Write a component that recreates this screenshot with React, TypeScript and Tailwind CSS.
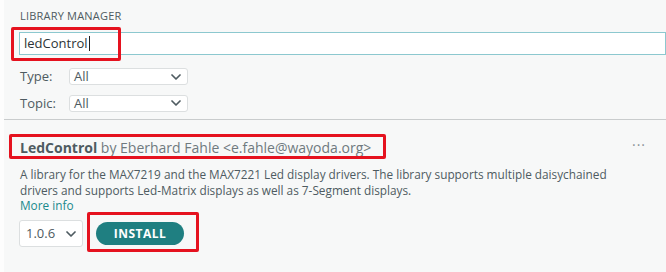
import React from 'react';

const Chevron = () => (
  <svg viewBox="0 0 10 6" className="w-[10px] h-[6px]" fill="none" stroke="#4e5b61" strokeWidth="1.7" strokeLinecap="round" strokeLinejoin="round">
    <path d="M1 1l4 4 4-4" />
  </svg>
);

const Select: React.FC<{ value: string; className?: string }> = ({ value, className }) => (
  <div className={`flex items-center justify-between bg-white border border-[#dcdfe0] rounded-[3px] pl-[4px] pr-[6px] text-[13px] text-[#4e5b61] ${className ?? ''}`}>
    <span>{value}</span>
    <Chevron />
  </div>
);

export default function App() {
  return (
    <div className="relative w-[666px] h-[272px] overflow-hidden flex bg-[#f7f8f8] text-[#4e5b61]" style={{ fontFamily: '"Open Sans", sans-serif' }}>
      <div className="w-[4px] bg-[#fdfdfd]" />
      <div className="flex-1 flex flex-col">
        <div className="pl-[16px] pt-[9px] pb-[6px] border-b border-[#c9cccd]">
          <div className="text-[11px] leading-[14px] tracking-[0.2px] uppercase">Library Manager</div>
          <div className="mt-[9px] -ml-[1px] h-[23px] bg-white border border-[#8cc8cf] flex items-center pl-[4px] text-[13px] text-[#2d3436]">
            ledControl<span className="inline-block w-[1px] h-[15px] bg-[#222] ml-[1px]" />
          </div>
          <div className="mt-[12px] flex flex-col gap-[7px] text-[13px]">
            <div className="flex items-center">
              <span className="w-[49px]">Type:</span>
              <Select value="All" className="w-[119px] h-[17px]" />
            </div>
            <div className="flex items-center">
              <span className="w-[49px]">Topic:</span>
              <Select value="All" className="w-[119px] h-[17px]" />
            </div>
          </div>
        </div>
        <div className="pl-[16px] pr-[20px] pt-[17px]">
          <div className="flex items-center justify-between h-[20px] text-[14px]">
            <div>
              <span className="font-bold">LedControl</span>
              <span className="text-[#6f7a7f]"> by Eberhard Fahle &lt;e.fahle@wayoda.org&gt;</span>
            </div>
            <span className="tracking-[1px] text-[#8a9296] -mt-[6px]">···</span>
          </div>
          <p className="mt-[9px] text-[11.8px] leading-[16px]">
            A library for the MAX7219 and the MAX7221 Led display drivers. The library supports multiple daisychained
            <br />
            drivers and supports Led-Matrix displays as well as 7-Segment displays.
          </p>
          <a className="block text-[11.8px] leading-[14px] text-[#1a8a8c]">More info</a>
          <div className="mt-[8px] flex items-center">
            <Select value="1.0.6" className="w-[64px] h-[27px] -ml-[1px] pl-[6px] pr-[5px]" />
            <button className="ml-[13px] w-[88px] h-[23px] rounded-full bg-[#1f7f81] text-white font-bold text-[12px] tracking-[0.5px] flex items-center justify-center">
              INSTALL
            </button>
          </div>
        </div>
      </div>

      {/* red annotation boxes */}
      <div className="absolute left-[11px] top-[27px] w-[110px] h-[34px] border-[3px] border-[#e5121f] rounded-[2px] pointer-events-none" />
      <div className="absolute left-[9px] top-[134px] w-[377px] h-[25px] border-[3px] border-[#e5121f] rounded-[2px] pointer-events-none" />
      <div className="absolute left-[87px] top-[212px] w-[112px] h-[40px] border-[3px] border-[#e5121f] rounded-[2px] pointer-events-none" />
    </div>
  );
}
